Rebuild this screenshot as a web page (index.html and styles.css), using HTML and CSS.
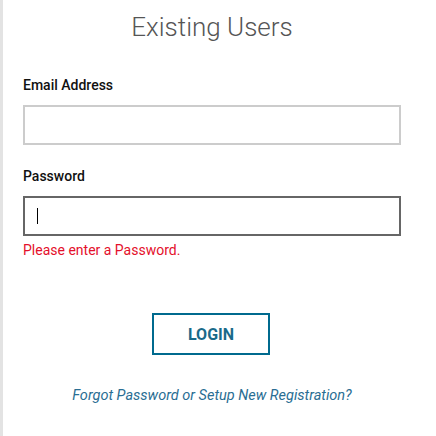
FILE: index.html
```html
<!DOCTYPE html>
<html lang="en">
<head>
<meta charset="utf-8">
<title>Existing Users</title>
<link rel="stylesheet" href="styles.css">
</head>
<body>
<div class="page">
  <form class="login-form" onsubmit="return false;">
    <h1 class="title">Existing Users</h1>
    <label class="field-label email-label" for="email">Email Address</label>
    <input class="field email-field" id="email" type="email">
    <label class="field-label password-label" for="password">Password</label>
    <div class="field-wrap">
      <input class="field password-field" id="password" type="password">
      <span class="caret"></span>
    </div>
    <div class="error">Please enter a Password.</div>
    <div class="actions">
      <button class="login-btn" type="submit">LOGIN</button>
    </div>
    <div class="links">
      <a class="forgot-link" href="#">Forgot Password or Setup New Registration?</a>
    </div>
  </form>
</div>
</body>
</html>
```
FILE: styles.css
```css
html, body {
  margin: 0;
  padding: 0;
  background: #ffffff;
}
body {
  font-family: Roboto, "Liberation Sans", Arial, sans-serif;
}
.page {
  box-sizing: border-box;
  min-height: 436px;
  border-left: 3px solid #e3e3e3;
  padding: 12px 35px 0 20px;
}
.login-form {
  display: flex;
  flex-direction: column;
  width: 378px;
}
.title {
  margin: 0;
  font-size: 26px;
  line-height: 30px;
  font-weight: 300;
  color: #555555;
  text-align: center;
}
.field-label {
  display: block;
  font-size: 14px;
  line-height: 16px;
  font-weight: 500;
  color: #111111;
}
.email-label {
  margin-top: 35px;
  margin-bottom: 12px;
}
.password-label {
  margin-top: 23px;
  margin-bottom: 12px;
}
.field {
  box-sizing: border-box;
  width: 378px;
  height: 40px;
  margin: 0;
  padding: 0 12px;
  border: 2px solid #cccccc;
  border-radius: 0;
  background: #ffffff;
  font-family: inherit;
  font-size: 16px;
  outline: none;
}
.password-field {
  border-color: #666666;
}
.field-wrap {
  position: relative;
  height: 40px;
}
.caret {
  position: absolute;
  left: 14px;
  top: 12px;
  width: 1px;
  height: 16px;
  background: #000000;
}
.error {
  margin-top: 6px;
  font-size: 14px;
  line-height: 16px;
  color: #e4102b;
}
.actions {
  display: flex;
  justify-content: center;
  margin-top: 55px;
  padding-right: 2px;
}
.login-btn {
  box-sizing: border-box;
  width: 118px;
  height: 42px;
  margin: 0;
  padding: 0;
  border: 2px solid #006a8e;
  border-radius: 0;
  background: #ffffff;
  font-family: inherit;
  font-size: 16px;
  font-weight: 700;
  color: #1a6a8a;
  cursor: pointer;
}
.links {
  margin-top: 32px;
  text-align: center;
  font-size: 14.5px;
  line-height: 17px;
}
.forgot-link {
  font-style: italic;
  color: #2a6e93;
  text-decoration: none;
}
```
